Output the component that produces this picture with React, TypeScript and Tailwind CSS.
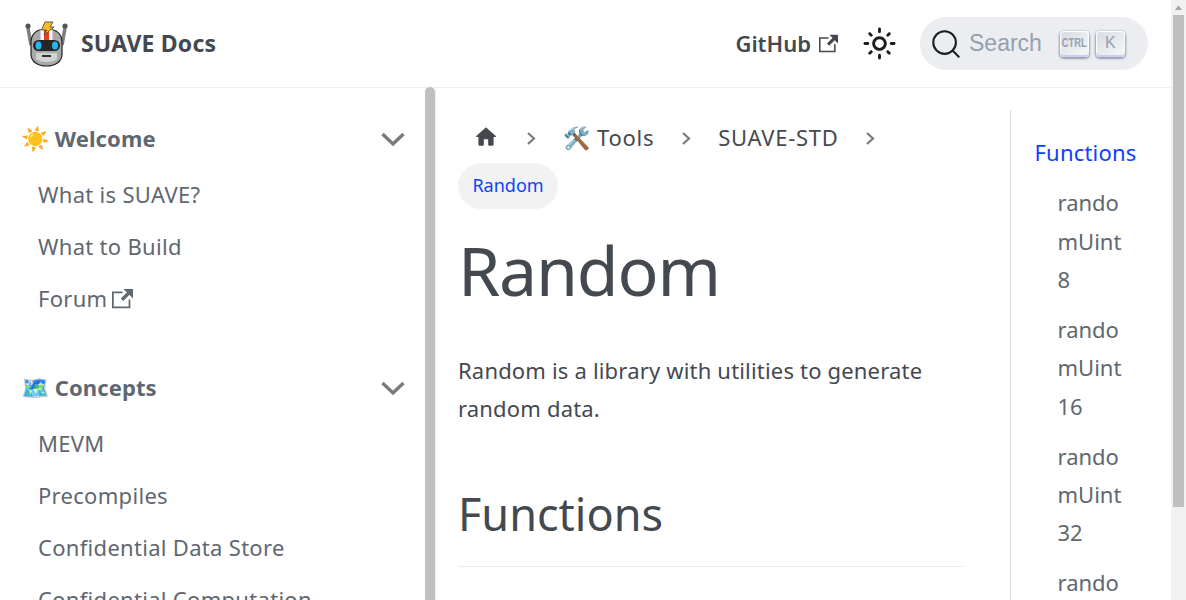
import type { ReactNode } from "react";

const font = "font-['Noto_Sans',sans-serif]";

const ExternalIcon = ({ size }: { size: number }) => (
  <svg width={size} height={size} viewBox="0 0 24 24" fill="currentColor" className="shrink-0">
    <path d="M21 13v10h-21v-19h12v2h-10v15h17v-8h2zm3-12h-10.988l4.035 4-6.977 7.07 2.828 2.828 6.977-7.07 4.125 4.172v-11z" />
  </svg>
);

const SunIcon = () => (
  <svg width="35" height="35" viewBox="0 0 24 24" fill="#1c1e21" className="shrink-0">
    <path d="M12,9c1.65,0,3,1.35,3,3s-1.35,3-3,3s-3-1.35-3-3S10.35,9,12,9 M12,7c-2.76,0-5,2.24-5,5s2.24,5,5,5s5-2.24,5-5 S14.76,7,12,7L12,7z M2,13l2,0c0.55,0,1-0.45,1-1s-0.45-1-1-1l-2,0c-0.55,0-1,0.45-1,1S1.45,13,2,13z M20,13l2,0c0.55,0,1-0.45,1-1 s-0.45-1-1-1l-2,0c-0.55,0-1,0.45-1,1S19.45,13,20,13z M11,2v2c0,0.55,0.45,1,1,1s1-0.45,1-1V2c0-0.55-0.45-1-1-1S11,1.45,11,2z M11,20v2c0,0.55,0.45,1,1,1s1-0.45,1-1v-2c0-0.55-0.45-1-1-1C11.45,19,11,19.45,11,20z M5.99,4.58c-0.39-0.39-1.03-0.39-1.41,0 c-0.39,0.39-0.39,1.03,0,1.41l1.06,1.06c0.39,0.39,1.03,0.39,1.41,0s0.39-1.03,0-1.41L5.99,4.58z M18.36,16.95 c-0.39-0.39-1.03-0.39-1.41,0c-0.39,0.39-0.39,1.03,0,1.41l1.06,1.06c0.39,0.39,1.03,0.39,1.41,0c0.39-0.39,0.39-1.03,0-1.41 L18.36,16.95z M19.42,5.99c0.39-0.39,0.39-1.03,0-1.41c-0.39-0.39-1.03-0.39-1.41,0l-1.06,1.06c-0.39,0.39-0.39,1.03,0,1.41 s1.03,0.39,1.41,0L19.42,5.99z M7.05,18.36c0.39-0.39,0.39-1.03,0-1.41c-0.39-0.39-1.03-0.39-1.41,0l-1.06,1.06 c-0.39,0.39-0.39,1.03,0,1.41s1.03,0.39,1.41,0L7.05,18.36z" />
  </svg>
);

const SearchIcon = () => (
  <svg width="30" height="30" viewBox="0 0 20 20" className="shrink-0">
    <path
      d="M14.386 14.386l4.0877 4.0877-4.0877-4.0877c-2.9418 2.9419-7.7115 2.9419-10.6533 0-2.9419-2.9418-2.9419-7.7115 0-10.6533 2.9418-2.9419 7.7115-2.9419 10.6533 0 2.9419 2.9418 2.9419 7.7115 0 10.6533z"
      stroke="#1c1e21"
      strokeWidth="1.4"
      fill="none"
      strokeLinecap="round"
      strokeLinejoin="round"
    />
  </svg>
);

const HomeIcon = () => (
  <svg width="26" height="26" viewBox="0 0 24 24" fill="#444950" className="shrink-0">
    <path d="M10 19v-5h4v5c0 .55.45 1 1 1h3c.55 0 1-.45 1-1v-7h1.7c.46 0 .68-.57.33-.87L12.67 3.6c-.38-.34-.96-.34-1.34 0l-8.36 7.53c-.34.3-.13.87.33.87H5v7c0 .55.45 1 1 1h3c.55 0 1-.45 1-1z" />
  </svg>
);

const Crumb = ({ className }: { className: string }) => (
  <svg width="20" height="20" viewBox="0 0 20 20" className={`shrink-0 ${className}`}>
    <path d="M7 6 L13 11.5 L7 17" stroke="#7a7a7a" strokeWidth="2.2" fill="none" />
  </svg>
);

const Caret = () => (
  <svg width="24" height="15" viewBox="0 0 24 15" className="shrink-0">
    <path d="M1.5 2 L12 12 L22.5 2" stroke="#7a7a7a" strokeWidth="3.4" fill="none" />
  </svg>
);

const Robot = () => (
  <svg width="46" height="46" viewBox="0 0 46 46" className="shrink-0">
    <path d="M4 7 L7 24 M41 7 L38 24" stroke="#7d7d7d" strokeWidth="3.5" fill="none" />
    <circle cx="4" cy="5" r="2.6" fill="#555" />
    <circle cx="41" cy="5" r="2.6" fill="#555" />
    <path d="M7 22 C7 11 14 8 22.5 8 C31 8 38 11 38 22 L38 33 C38 41 31 45 22.5 45 C14 45 7 41 7 33 Z" fill="#a9a9a9" stroke="#222" strokeWidth="1.2" />
    <path d="M12 32 L33 32 L33 38 C30 42 15 42 12 38 Z" fill="#d2d2d2" />
    <rect x="16.5" y="8.6" width="12" height="11" fill="#f5f5f5" />
    <rect x="20" y="9" width="5" height="11" fill="#e2401f" />
    <rect x="9" y="19" width="27" height="11" rx="5.5" fill="#262626" />
    <ellipse cx="14.5" cy="24.5" rx="3" ry="4" fill="#25b6f0" />
    <ellipse cx="31" cy="24.5" rx="3" ry="4" fill="#25b6f0" />
    <rect x="18" y="34" width="9" height="2" fill="#333" />
    <path d="M21 1 L29 1 L26 6 L30 6 L20 14 L22.5 9 L17.5 9 Z" fill="#f7bd25" stroke="#3b3b3b" strokeWidth="0.8" />
  </svg>
);

const Kbd = ({ children }: { children: ReactNode }) => (
  <span className="flex h-[26px] w-[29px] items-start justify-center rounded-[4px] bg-gradient-to-br from-[#d5dbe4] to-[#f8f8f8] pt-[3px] font-['Liberation_Sans',sans-serif] text-[#969faf] shadow-[inset_0_-2px_0_0_#cdcde6,inset_0_0_1px_1px_#fff,0_1px_2px_1px_rgba(30,35,90,0.4)]">
    {children}
  </span>
);

const SideGroup = ({ icon, title, items }: { icon: ReactNode; title: string; items: ReactNode[] }) => (
  <div className="mb-[38px]">
    <div className="flex h-[52px] items-center justify-between pl-[21px] pr-[30px]">
      <div className="flex items-center gap-[5px] text-[22px] font-bold tracking-[0.1px] text-[#606770]">
        {icon}
        <span className="pb-[2px]">{title}</span>
      </div>
      <Caret />
    </div>
    <div className="mt-[3px]">
      {items.map((item, i) => (
        <div key={i} className="flex h-[52px] items-center pl-[38px] text-[22px] tracking-[0.3px] text-[#606770]">
          {item}
        </div>
      ))}
    </div>
  </div>
);

const TocItem = ({ lines }: { lines: string[] }) => (
  <div className="mb-[11.4px] pl-[23px] text-[22px] leading-[38.4px] text-[#606770]">
    {lines.map((l) => (
      <div key={l}>{l}</div>
    ))}
  </div>
);

export default function App() {
  return (
    <div className={`${font} flex h-[600px] w-[1186px] overflow-hidden bg-white`}>
      <div className="flex w-[1171px] flex-col">
        <header className="flex h-[88px] shrink-0 items-center border-b border-[#f0f0f1] pl-[24px] pr-[23px]">
          <Robot />
          <span className="ml-[11px] text-[23px] font-bold tracking-[0.2px] text-[#444950]">SUAVE Docs</span>
          <div className="ml-auto flex items-center">
            <span className="text-[22px] font-semibold text-[#444950]">GitHub</span>
            <span className="ml-[8px] text-[#444950]">
              <ExternalIcon size={19} />
            </span>
            <div className="ml-[24px]">
              <SunIcon />
            </div>
            <div className="ml-[23px] flex h-[53px] w-[228px] items-center rounded-full bg-[#ebedf0] pl-[11px]">
              <SearchIcon />
              <span className="ml-[8px] font-['Liberation_Sans',sans-serif] text-[23px] text-[#969faf]">Search</span>
              <div className="ml-[18px] flex gap-[7px]">
                <Kbd>
                  <span className="scale-x-[0.72] text-[13px] font-bold leading-[18px]">CTRL</span>
                </Kbd>
                <Kbd>
                  <span className="text-[16px] leading-[17px]">K</span>
                </Kbd>
              </div>
            </div>
          </div>
        </header>
        <div className="flex min-h-0 flex-1">
          <aside className="relative w-[436px] shrink-0 border-r border-[#f0f0f1]">
            <div className="h-full overflow-hidden pt-[25px]">
              <SideGroup
                icon={<span className="pt-[2px] font-['Noto_Color_Emoji'] text-[23px]">☀️</span>}
                title="Welcome"
                items={[
                  "What is SUAVE?",
                  "What to Build",
                  <span key="f" className="flex items-center gap-[5px]">
                    Forum <ExternalIcon size={21} />
                  </span>,
                ]}
              />
              <SideGroup
                icon={<span className="pt-[2px] font-['Noto_Color_Emoji'] text-[23px]">🗺️</span>}
                title="Concepts"
                items={["MEVM", "Precompiles", "Confidential Data Store", "Confidential Computation"]}
              />
            </div>
            <div className="absolute -top-px bottom-0 right-0 w-[10px] rounded-t-[5px] bg-[#bfbfbf]" />
          </aside>
          <main className="flex min-w-0 flex-1">
            <div className="w-[574px] shrink-0 pl-[22px] pr-[46px] pt-[23px] text-[#444950]">
              <nav className="flex flex-wrap items-center text-[22px] tracking-[0.5px]">
                <div className="flex h-[52px] items-center pl-[15px]">
                  <HomeIcon />
                  <Crumb className="ml-[22px]" />
                </div>
                <span className="ml-[22px] tracking-[0.7px]">🛠️ Tools</span>
                <Crumb className="ml-[22px]" />
                <span className="ml-[22px] tracking-[0.7px]">SUAVE-STD</span>
                <Crumb className="ml-[22px]" />
                <span className="flex h-[46px] w-[100px] items-center justify-center rounded-[24px] bg-[#f2f2f2] pb-px text-[18px] tracking-normal text-[#0b42ff]">
                  Random
                </span>
              </nav>
              <h1 className="mt-[19px] text-[68px] leading-[84px] tracking-[-1.2px]">Random</h1>
              <p className="mt-[39px] text-[22px] leading-[38.4px] tracking-[0.18px]">
                Random is a library with utilities to generate random data.
              </p>
              <h2 className="mt-[56px] text-[45px] leading-[60px]">Functions</h2>
              <div className="mt-[22px] border-b border-[#ebebeb]" />
            </div>
            <div className="mt-[22px] flex-1 overflow-hidden border-l border-[#dadde1] pl-[23.5px] pt-[23px]">
              <div className="mb-[12px] text-[22px] leading-[38.4px] tracking-[0.2px] text-[#0b42ff]">Functions</div>
              <TocItem lines={["rando", "mUint", "8"]} />
              <TocItem lines={["rando", "mUint", "16"]} />
              <TocItem lines={["rando", "mUint", "32"]} />
              <TocItem lines={["rando"]} />
            </div>
          </main>
        </div>
      </div>
      <div className="flex w-[15px] flex-col items-center bg-[#f1f1f1]">
        <svg width="15" height="15" viewBox="0 0 15 15" className="shrink-0">
          <path d="M7.5 5.5 L11 10 L4 10 Z" fill="#a3a3a3" />
        </svg>
        <div className="h-[492px] w-[11px] bg-[#bfbfbf]" />
      </div>
    </div>
  );
}
